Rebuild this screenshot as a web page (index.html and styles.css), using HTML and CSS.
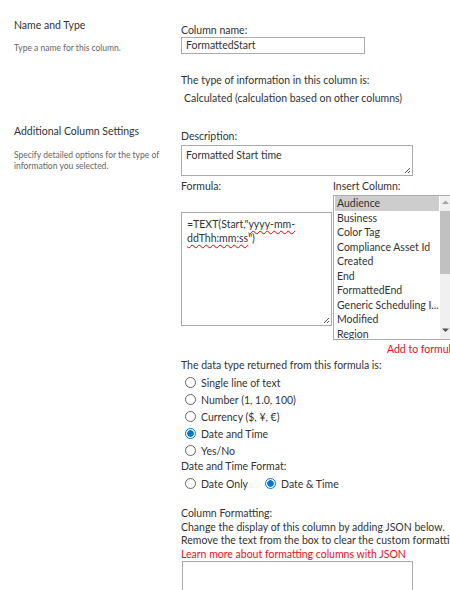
FILE: index.html
```html
<!DOCTYPE html>
<html>
<head>
<meta charset="utf-8">
<link rel="stylesheet" href="styles.css">
</head>
<body>
<div class="page">
  <section class="sec sec1">
    <div class="side">
      <div class="side-title">Name and Type</div>
      <div class="side-desc">Type a name for this column.</div>
    </div>
    <div class="main">
      <div class="lbl">Column name:</div>
      <div class="input">FormattedStart</div>
      <div class="line type-lbl">The type of information in this column is:</div>
      <div class="line calc">Calculated (calculation based on other columns)</div>
    </div>
  </section>
  <section class="sec sec2">
    <div class="side">
      <div class="side-title">Additional Column Settings</div>
      <div class="side-desc">Specify detailed options for the type of information you selected.</div>
    </div>
    <div class="main">
      <div class="lbl">Description:</div>
      <div class="area desc-area">Formatted Start time
        <svg class="grip" width="8" height="8" viewBox="0 0 8 8"><path d="M7 2L2 7M7 5L5 7" stroke="#555" stroke-width="1" fill="none"/></svg>
      </div>
      <div class="formula-row">
        <div class="f-col">
          <div class="lbl">Formula:</div>
          <div class="area formula-area">=TEXT(Start,"<span class="sp">yyyy-mm-</span> <span class="sp">ddThh:mm:ss</span>")
            <svg class="grip" width="8" height="8" viewBox="0 0 8 8"><path d="M7 2L2 7M7 5L5 7" stroke="#555" stroke-width="1" fill="none"/></svg>
          </div>
        </div>
        <div class="i-col">
          <div class="lbl">Insert Column:</div>
          <div class="listbox">
            <div class="items">
              <div class="item sel">Audience</div>
              <div class="item">Business</div>
              <div class="item">Color Tag</div>
              <div class="item">Compliance Asset Id</div>
              <div class="item">Created</div>
              <div class="item">End</div>
              <div class="item">FormattedEnd</div>
              <div class="item">Generic Scheduling I...</div>
              <div class="item">Modified</div>
              <div class="item">Region</div>
            </div>
            <div class="sbar">
              <svg class="arr up" width="11" height="10" viewBox="0 0 11 10"><path d="M2 7L5.5 3.5L9 7Z" fill="#a3a3a3"/></svg>
              <div class="thumb"></div>
              <svg class="arr down" width="11" height="10" viewBox="0 0 11 10"><path d="M2 3.5L5.5 7L9 3.5Z" fill="#505050"/></svg>
            </div>
          </div>
          <div class="add">Add to formula</div>
        </div>
      </div>
      <div class="line dt-lbl">The data type returned from this formula is:</div>
      <div class="radios">
        <div class="r"><span class="dot"></span>Single line of text</div>
        <div class="r"><span class="dot"></span>Number (1, 1.0, 100)</div>
        <div class="r"><span class="dot"></span>Currency ($, ¥, €)</div>
        <div class="r"><span class="dot on"></span>Date and Time</div>
        <div class="r"><span class="dot"></span>Yes/No</div>
      </div>
      <div class="line">Date and Time Format:</div>
      <div class="radios inline">
        <div class="r"><span class="dot"></span>Date Only</div>
        <div class="r"><span class="dot on"></span>Date &amp; Time</div>
      </div>
      <div class="fmt">
        <div>Column Formatting:</div>
        <div>Change the display of this column by adding JSON below.</div>
        <div class="nowrap">Remove the text from the box to clear the custom formatting.</div>
        <div class="red">Learn more about formatting columns with JSON</div>
      </div>
      <div class="area json-area"></div>
    </div>
  </section>
</div>
</body>
</html>
```
FILE: styles.css
```css
html, body {
  margin: 0;
  padding: 0;
  background: #fff;
  overflow: hidden;
}
.page {
  width: 450px;
  height: 590px;
  overflow: hidden;
  font-family: "Lato", "Open Sans", sans-serif;
  color: #333;
}
.sec {
  display: flex;
}
.side {
  width: 167px;
  padding-left: 14px;
  flex: none;
}
.side-title {
  font-size: 10.5px;
  line-height: 13px;
  color: #333;
}
.side-desc {
  font-size: 8.5px;
  line-height: 11px;
  color: #666;
  width: 150px;
}
.sec1 .side { padding-top: 19px; }
.sec1 .side-desc { margin-top: 11px; }
.sec2 .side { padding-top: 20px; }
.sec2 .side-desc { margin-top: 12px; }
.main {
  font-size: 10.5px;
  line-height: 14px;
  white-space: nowrap;
}
.sec1 .main { padding-top: 24px; }
.sec2 .main { padding-top: 25px; }
.lbl {
  line-height: 13px;
}
.input {
  box-sizing: border-box;
  width: 184px;
  height: 17px;
  border: 1px solid #ababab;
  margin-top: 0;
  padding: 0 4px;
  line-height: 15px;
}
.type-lbl { margin-top: 19px; }
.calc { margin-top: 4px; padding-left: 3px; }
.area {
  position: relative;
  box-sizing: border-box;
  border: 1px solid #ababab;
  padding: 2px 4px;
}
.grip {
  position: absolute;
  right: 1px;
  bottom: 1px;
}
.desc-area {
  width: 232px;
  height: 31px;
  margin-top: 2px;
}
.formula-row {
  display: flex;
  margin-top: 4px;
}
.f-col { width: 152px; }
.formula-area {
  width: 151px;
  height: 114px;
  margin-top: 19px;
  white-space: normal;
  padding: 4px 5px;
  line-height: 14px;
}
.sp {
  text-decoration: underline wavy #e00;
  text-decoration-thickness: 1px;
  text-underline-offset: 2px;
}
.i-col { width: 130px; }
.listbox {
  box-sizing: border-box;
  width: 119px;
  height: 145px;
  margin-top: 2px;
  border: 1px solid #ababab;
  display: flex;
  overflow: hidden;
}
.items {
  flex: 1;
  padding: 0 1px;
}
.item {
  height: 14.5px;
  line-height: 14.5px;
  padding-left: 2px;
  color: #333;
}
.item.sel { background: #cdcdcd; }
.sbar {
  width: 12px;
  flex: none;
  background: #f0f0f0;
  position: relative;
}
.arr { position: absolute; left: 0; }
.arr.up { top: 1px; }
.arr.down { top: 129px; }
.thumb {
  position: absolute;
  left: 0;
  width: 12px;
  top: 15px;
  height: 63px;
  background: #c1c1c1;
}
.add {
  color: #e81123;
  margin-top: 2px;
  padding-left: 54px;
}
.dt-lbl { margin-top: 2px; }
.radios { margin-top: 2px; }
.r {
  height: 17px;
  display: flex;
  align-items: center;
  padding-left: 4px;
}
.dot {
  box-sizing: border-box;
  width: 11px;
  height: 11px;
  border: 1px solid #666;
  border-radius: 50%;
  margin-right: 5px;
  flex: none;
}
.dot.on {
  border-color: #0078d4;
  background: radial-gradient(circle, #0078d4 0 3px, #fff 3.5px);
}
.radios.inline {
  display: flex;
  gap: 13px;
}
.fmt {
  margin-top: 15px;
  line-height: 13.5px;
}
.red { color: #e81123; }
.json-area {
  width: 231px;
  height: 40px;
  margin-left: 1px;
  margin-top: 0;
}
```
